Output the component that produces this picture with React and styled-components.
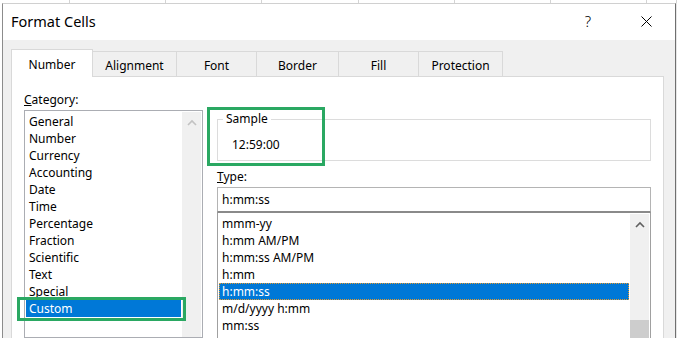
import React from 'react';
import styled, { createGlobalStyle } from 'styled-components';

const GlobalStyle = createGlobalStyle`
  html, body { margin: 0; padding: 0; background: #fff; }
  body { font-family: 'Noto Sans', 'Segoe UI', sans-serif; color: #000; }
  * { box-sizing: border-box; }
`;

const Screen = styled.div`
  width: 677px;
  height: 338px;
  overflow: hidden;
  display: flex;
  flex-direction: column;
  background: #fff;
`;

const SheetStrip = styled.div`
  display: flex;
  height: 3px;
  flex: none;
`;

const SheetCell = styled.div`
  width: ${p => p.$w}px;
  flex: none;
  border-right: 1px solid #d4d4d4;
`;

const Desk = styled.div`
  display: flex;
  flex: 1;
  min-height: 0;
`;

const Gutter = styled.div`
  width: ${p => p.$w}px;
  flex: none;
  background: ${p => p.$bg};
`;

const Dialog = styled.div`
  flex: 1;
  min-width: 0;
  display: flex;
  flex-direction: column;
  background: #f0f0f0;
  border-left: 1px solid #8c8c8c;
  border-right: 1px solid #6f6f6f;
  border-top: 1px solid #d0d0d0;
`;

const TitleBar = styled.div`
  height: 36px;
  flex: none;
  display: flex;
  align-items: center;
  background: #fff;
  padding-left: 8px;
`;

const Title = styled.div`
  font-size: 14.5px;
  padding-bottom: 2px;
`;

const TitleButtons = styled.div`
  margin-left: auto;
  display: flex;
  height: 100%;
`;

const TitleButton = styled.div`
  width: 58px;
  height: 100%;
  display: flex;
  align-items: center;
  justify-content: center;
  font-size: 15px;
  font-weight: 300;
  padding-bottom: 2px;
`;

const Body = styled.div`
  flex: 1;
  min-height: 0;
  display: flex;
  flex-direction: column;
  padding: 9px 11px 0 8px;
`;

const TabBar = styled.div`
  display: flex;
  align-items: flex-end;
  height: 27px;
  flex: none;
  padding-left: 1px;
`;

const Tab = styled.div`
  width: ${p => p.$w}px;
  height: ${p => (p.$active ? 28 : 25)}px;
  margin-left: -1px;
  margin-bottom: ${p => (p.$active ? -1 : 0)}px;
  position: relative;
  z-index: ${p => (p.$active ? 1 : 0)};
  display: flex;
  align-items: center;
  justify-content: center;
  padding-top: ${p => (p.$active ? 1 : 3)}px;
  font-size: 12px;
  background: ${p => (p.$active ? '#fff' : '#f0f0f0')};
  border: 1px solid #d9d9d9;
  border-bottom: none;
`;

const Panel = styled.div`
  flex: 1;
  min-height: 0;
  background: #fff;
  border: 1px solid #d9d9d9;
  border-bottom: none;
  display: grid;
  grid-template-columns: 179px 434px;
  column-gap: 14px;
  padding: 14px 0 0 12px;
`;

const Column = styled.div`
  display: flex;
  flex-direction: column;
  min-height: 0;
`;

const Label = styled.div`
  font-size: 12px;
  line-height: 17px;
  margin-top: ${p => p.$top || 0}px;
  margin-bottom: 2px;
`;

const ListBox = styled.div`
  flex: 1;
  display: flex;
  border: 1px solid ${p => p.$edge};
  border-top-color: ${p => p.$topEdge || p.$edge};
`;

const Items = styled.div`
  flex: 1;
  padding: 2px 0 0 1px;
  margin-right: 1px;
`;

const Item = styled.div`
  position: relative;
  height: 17px;
  line-height: 17px;
  font-size: 12px;
  padding-left: 3px;
  white-space: nowrap;
  background: ${p => (p.$selected ? '#0078d7' : 'transparent')};
  color: ${p => (p.$selected ? '#fff' : '#000')};
  outline: ${p => (p.$focus ? '1px dotted #e59a2e' : 'none')};
  outline-offset: -1px;
`;

const ScrollBar = styled.div`
  width: 19px;
  flex: none;
  margin: 1px 1px 0 0;
  background: #f0f0f0;
  display: flex;
  flex-direction: column;
  align-items: center;
`;

const ArrowButton = styled.div`
  height: 20px;
  width: 100%;
  display: flex;
  align-items: center;
  justify-content: center;
  color: ${p => p.$tone};
`;

const Thumb = styled.div`
  width: 100%;
  height: 40px;
  margin-top: ${p => p.$offset}px;
  background: #cdcdcd;
`;

const Annotation = styled.div`
  position: absolute;
  border: 3px solid #2aa862;
  pointer-events: none;
`;

const SampleWrap = styled.div`
  position: relative;
  margin-top: 20px;
`;

const SampleBox = styled.fieldset`
  margin: 0;
  padding: 0 0 7px 0;
  min-width: 0;
  border: 1px solid #dcdcdc;
`;

const Legend = styled.legend`
  font-size: 12px;
  line-height: 16px;
  padding: 0 3px;
  margin-left: 5px;
`;

const SampleValue = styled.div`
  font-size: 12px;
  line-height: 16px;
  margin: 10px 0 0 14px;
`;

const TypeInput = styled.div`
  height: 25px;
  flex: none;
  border: 1px solid #b4b4b4;
  border-bottom-color: #8a8a8a;
  font-size: 12px;
  line-height: 23px;
  padding-left: 4px;
`;

const Chevron = () => (
  <svg width="10" height="7" viewBox="0 0 10 7">
    <polyline points="1,6 5,2 9,6" fill="none" stroke="currentColor" strokeWidth="1.6" />
  </svg>
);

const Close = () => (
  <svg width="11" height="11" viewBox="0 0 11 11">
    <path d="M0.5 0.5 L10.5 10.5 M10.5 0.5 L0.5 10.5" stroke="#000" strokeWidth="1" />
  </svg>
);

const sheetCols = [70, 96, 96, 97, 96, 96, 96, 30];

const tabs = [
  { label: 'Number', w: 82 },
  { label: 'Alignment', w: 85 },
  { label: 'Font', w: 81 },
  { label: 'Border', w: 83 },
  { label: 'Fill', w: 81 },
  { label: 'Protection', w: 85 }
];

const categories = [
  'General', 'Number', 'Currency', 'Accounting', 'Date', 'Time',
  'Percentage', 'Fraction', 'Scientific', 'Text', 'Special', 'Custom', ''
];

const types = ['mmm-yy', 'h:mm AM/PM', 'h:mm:ss AM/PM', 'h:mm', 'h:mm:ss', 'm/d/yyyy h:mm', 'mm:ss'];

export default function App() {
  return (
    <Screen>
      <GlobalStyle />
      <SheetStrip>
        {sheetCols.map((w, i) => (
          <SheetCell key={i} $w={w} />
        ))}
      </SheetStrip>
      <Desk>
        <Gutter $w={2} $bg="#fff" />
        <Dialog>
          <TitleBar>
            <Title>Format Cells</Title>
            <TitleButtons>
              <TitleButton>?</TitleButton>
              <TitleButton>
                <Close />
              </TitleButton>
            </TitleButtons>
          </TitleBar>
          <Body>
            <TabBar>
              {tabs.map((t, i) => (
                <Tab key={t.label} $w={t.w} $active={i === 0}>
                  {t.label}
                </Tab>
              ))}
            </TabBar>
            <Panel>
              <Column>
                <Label>
                  <u>C</u>ategory:
                </Label>
                <ListBox $edge="#abadb3">
                  <Items>
                    {categories.map((c, i) => (
                      <Item key={i} $selected={c === 'Custom'}>
                        {c}
                        {c === 'Custom' && (
                          <Annotation style={{ top: -3, bottom: -4, left: -9, right: -5 }} />
                        )}
                      </Item>
                    ))}
                  </Items>
                  <ScrollBar>
                    <ArrowButton $tone="#c2c2c2">
                      <Chevron />
                    </ArrowButton>
                  </ScrollBar>
                </ListBox>
              </Column>
              <Column>
                <SampleWrap>
                  <SampleBox>
                    <Legend>Sample</Legend>
                    <SampleValue>12:59:00</SampleValue>
                  </SampleBox>
                  <Annotation style={{ top: -4, left: -10, width: 118, height: 59 }} />
                </SampleWrap>
                <Label $top={7}>
                  <u>T</u>ype:
                </Label>
                <TypeInput>h:mm:ss</TypeInput>
                <ListBox $edge="#a0a0a0" $topEdge="#8a8a8a">
                  <Items>
                    {types.map(t => (
                      <Item key={t} $selected={t === 'h:mm:ss'} $focus={t === 'h:mm:ss'}>
                        {t}
                      </Item>
                    ))}
                  </Items>
                  <ScrollBar>
                    <ArrowButton $tone="#606060">
                      <Chevron />
                    </ArrowButton>
                    <Thumb $offset={86} />
                  </ScrollBar>
                </ListBox>
              </Column>
            </Panel>
          </Body>
        </Dialog>
        <Gutter $w={1} $bg="#e6e6e6" />
      </Desk>
    </Screen>
  );
}
